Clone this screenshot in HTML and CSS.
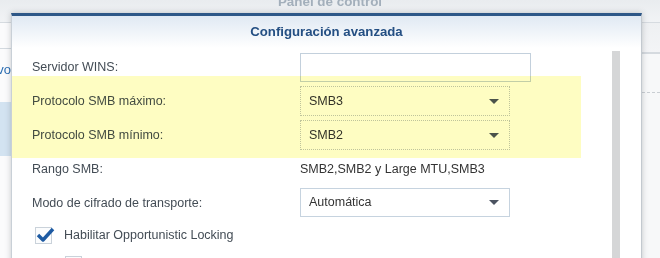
FILE: index.html
```html
<!DOCTYPE html>
<html lang="es">
<head>
    <meta charset="UTF-8">
    <meta name="viewport" content="width=device-width, initial-scale=1.0">
    <title>Configuración avanzada</title>
    <link rel="stylesheet" href="styles.css">
</head>
<body>
    <div class="desk">
        <header class="desk-title"><span>Panel de control</span></header>
        <section class="desk-body">
            <aside class="side">
                <div class="side-search"></div>
                <div class="side-item">Archivo</div>
                <div class="side-item selected"></div>
            </aside>
            <main class="desk-main">
                <div class="toolbar"></div>
                <div class="list-row"></div>
            </main>
        </section>
    </div>

    <div class="dialog">
        <header class="dlg-head">Configuración avanzada</header>
        <section class="dlg-body">
            <form class="form">
                <div class="row">
                    <label class="label">Servidor WINS:</label>
                    <input class="field text" type="text">
                </div>
                <div class="row">
                    <label class="label">Protocolo SMB máximo:</label>
                    <div class="field select dotted">SMB3<span class="arrow"></span></div>
                </div>
                <div class="row">
                    <label class="label">Protocolo SMB mínimo:</label>
                    <div class="field select dotted">SMB2<span class="arrow"></span></div>
                </div>
                <div class="row">
                    <label class="label">Rango SMB:</label>
                    <span class="value">SMB2,SMB2 y Large MTU,SMB3</span>
                </div>
                <div class="row short">
                    <label class="label">Modo de cifrado de transporte:</label>
                    <div class="field select">Automática<span class="arrow"></span></div>
                </div>
                <div class="row check-row">
                    <span class="check on">
                        <svg viewBox="0 0 20 20" width="20" height="20"><path d="M3 10 L8 15 L18 4" fill="none" stroke="#1d5aa2" stroke-width="3.4" stroke-linejoin="round"/></svg>
                    </span>
                    <span class="check-label">Habilitar Opportunistic Locking</span>
                </div>
                <div class="row check-row sub">
                    <span class="check"></span>
                    <span class="check-label">Habilitar arrendamiento SMB2</span>
                </div>
            </form>
            <div class="scrollbar"></div>
        </section>
        <div class="highlight"></div>
    </div>
</body>
</html>
```

FILE: styles.css
```css
html {
    box-sizing: border-box;
    font-family: "Liberation Sans", Arial, sans-serif;
    font-size: 12.5px;
}

*,
*:before,
*:after {
    box-sizing: inherit;
}

body {
    margin: 0;
    height: 100vh;
    overflow: hidden;
    background-color: #f7f8f9;
}

/* background window */

.desk {
    height: 100%;
    display: flex;
    flex-direction: column;
}

.desk-title {
    height: 23px;
    flex-shrink: 0;
    background: linear-gradient(#e9ecef, #f1f3f5);
    border-bottom: 1px solid #d6dbe0;
    color: #a3afbb;
    font-weight: bold;
    font-size: 13.4px;
    line-height: 16px;
    text-align: center;
}

.desk-title span {
    display: block;
    margin-top: -6px;
}

.desk-body {
    flex-grow: 1;
    display: flex;
}

.side {
    width: 11px;
    display: flex;
    flex-direction: column;
    background-color: #fbfbfc;
}

.side-search {
    height: 26px;
    border-bottom: 1px solid #d3d9df;
}

.side-item {
    height: 40px;
    display: flex;
    justify-content: flex-end;
    align-items: center;
    overflow: hidden;
    white-space: nowrap;
    color: #2a6db3;
    font-size: 13px;
}

.side-item.selected {
    margin-top: 13px;
    height: 54px;
    background-color: #d3e3f1;
}

.desk-main {
    flex-grow: 1;
    display: flex;
    flex-direction: column;
}

.toolbar {
    height: 31px;
    background: linear-gradient(#eef0f2, #f3f4f6);
    border-bottom: 2px solid #d5dadf;
}

.list-row {
    height: 39px;
    border-bottom: 1px dashed #c9ced3;
}

/* dialog */

.dialog {
    position: absolute;
    left: 11px;
    top: 13px;
    width: 631px;
    height: 300px;
    background-color: #fff;
    border-top: 3px solid #2d5787;
    border-left: 1px solid #c9d0d7;
    border-right: 1px solid #c3c9cf;
    box-shadow: 0 0 6px rgba(40, 50, 60, .25);
}

.dlg-head {
    height: 32px;
    line-height: 32px;
    text-align: center;
    font-weight: bold;
    font-size: 13.2px;
    color: #244f83;
    background: linear-gradient(#e0e9f3, #ffffff);
}

.dlg-body {
    display: flex;
}

.form {
    flex-grow: 1;
    padding: 2px 0 0 20px;
    color: #434c55;
}

.row {
    height: 34px;
    display: flex;
    align-items: center;
}

.row.short {
    height: 33px;
}

.label {
    width: 268px;
    flex-shrink: 0;
}

.field {
    height: 29px;
    border: 1px solid #c6d3df;
    background-color: #fff;
    font: inherit;
    color: #333;
}

.text {
    width: 231px;
    margin: 0;
    padding: 0 8px;
    border-color: #c3d0dc;
}

.select {
    width: 210px;
    padding: 0 8px;
    display: flex;
    align-items: center;
    justify-content: space-between;
    line-height: 1;
}

.select.dotted {
    border: 1px dotted #c0c6cc;
    height: 30px;
}

.arrow {
    width: 0;
    height: 0;
    margin-right: 2px;
    border-left: 5px solid transparent;
    border-right: 5px solid transparent;
    border-top: 5px solid #4b5361;
}

.value {
    color: #333;
}

.check-row {
    height: 32px;
    padding-left: 3px;
}

.check-row.sub {
    align-items: flex-start;
    padding-left: 33px;
    padding-top: 5px;
}

.check {
    position: relative;
    width: 17px;
    height: 17px;
    flex-shrink: 0;
    border: 1px solid #cad2da;
    background-color: #fbfcfd;
    margin-right: 12px;
}

.check svg {
    position: absolute;
    left: -1px;
    top: -3px;
}

.check-label {
    color: #434c55;
}

.scrollbar {
    width: 8px;
    height: 220px;
    margin: 3px 21px 0 0;
    background-color: #d5d6d7;
}

.highlight {
    position: absolute;
    left: 0;
    top: 60px;
    width: 569px;
    height: 82px;
    background-color: #fefdc2;
    mix-blend-mode: multiply;
}
```
